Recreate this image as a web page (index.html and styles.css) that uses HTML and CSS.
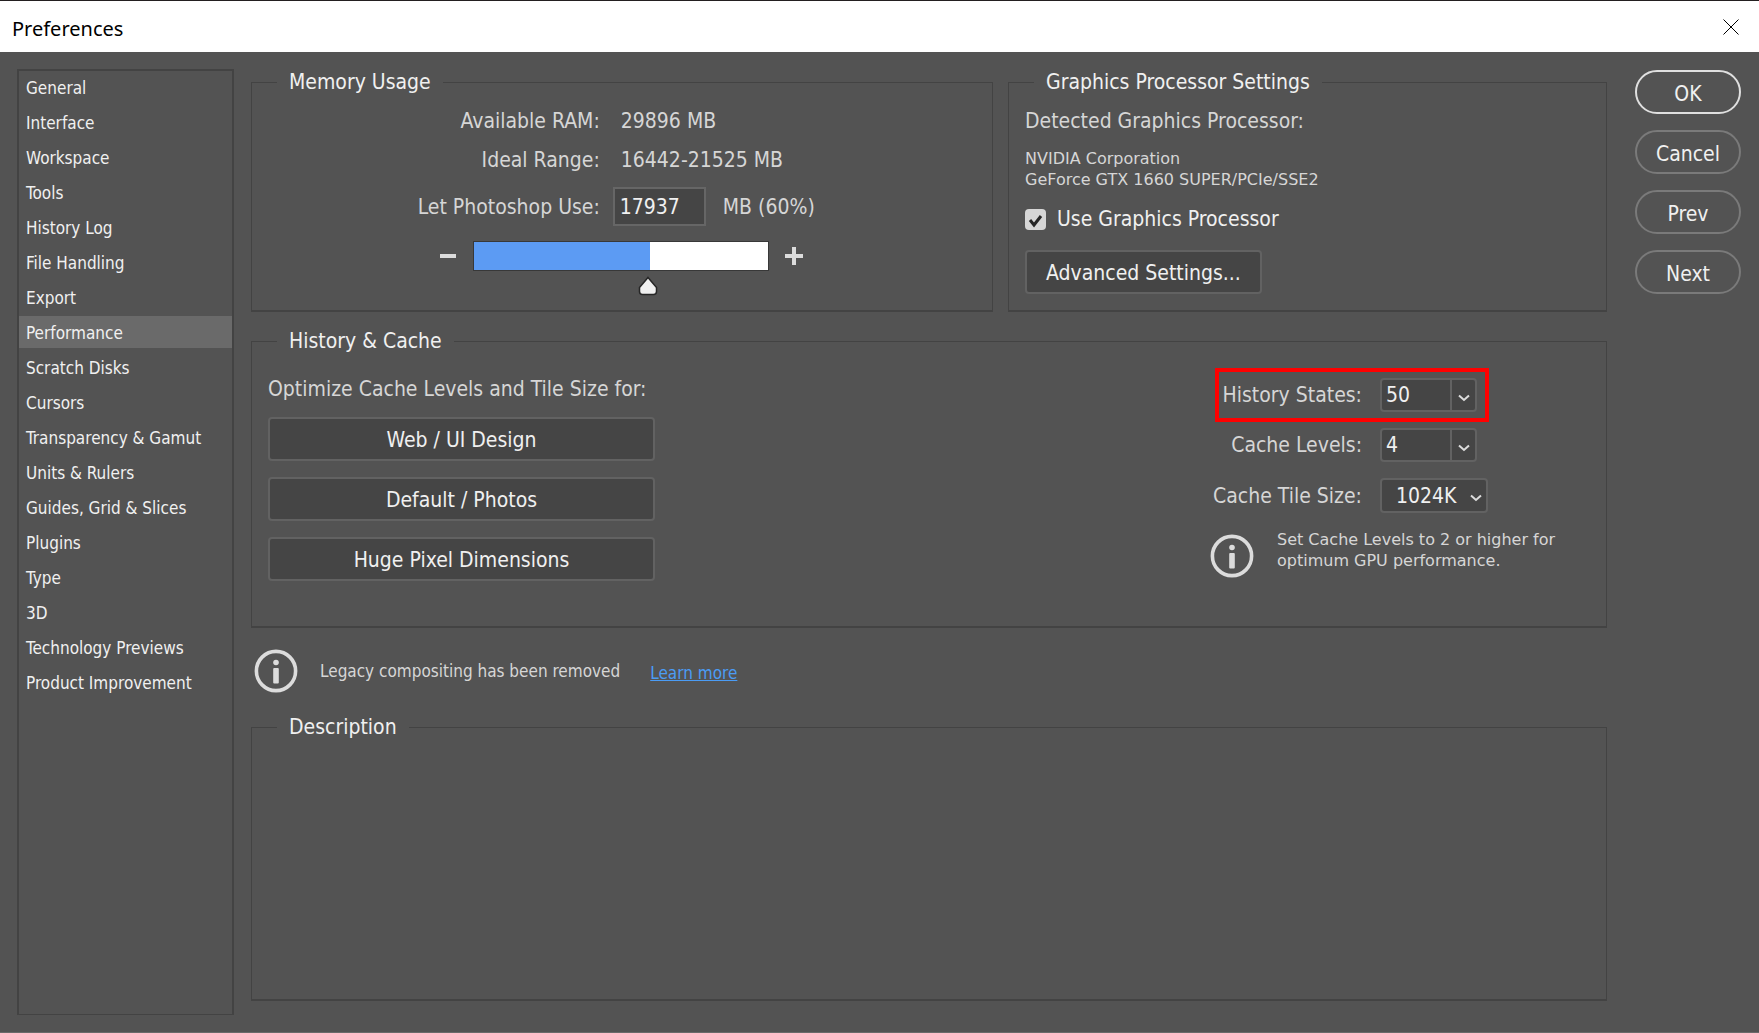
FILE: index.html
```html
<!doctype html>
<html lang="en">

<head>
    <meta charset="utf-8">
    <title>Preferences</title>
    <link rel="stylesheet" href="styles.css">
</head>

<body>
    <header class="titleBar">
        <h1>Preferences</h1>
        <button class="closeButton" type="button" aria-label="Close">
            <svg width="16" height="16" viewBox="0 0 16 16"><path d="M0.5 0.5l15 15M15.5 0.5l-15 15" /></svg>
        </button>
    </header>

    <form class="preferences" action="">
        <nav class="sections">
            <a href="#general">General</a>
            <a href="#interface">Interface</a>
            <a href="#workspace">Workspace</a>
            <a href="#tools">Tools</a>
            <a href="#history-log">History Log</a>
            <a href="#file-handling">File Handling</a>
            <a href="#export">Export</a>
            <a href="#performance" class="active">Performance</a>
            <a href="#scratch-disks">Scratch Disks</a>
            <a href="#cursors">Cursors</a>
            <a href="#transparency">Transparency &amp; Gamut</a>
            <a href="#units">Units &amp; Rulers</a>
            <a href="#guides">Guides, Grid &amp; Slices</a>
            <a href="#plugins">Plugins</a>
            <a href="#type">Type</a>
            <a href="#3d">3D</a>
            <a href="#technology">Technology Previews</a>
            <a href="#product">Product Improvement</a>
        </nav>

        <main class="content">
            <div class="topRow">
                <fieldset class="memory">
                    <legend>Memory Usage</legend>
                    <div class="memoryRow">
                        <span class="memoryLabel">Available RAM:</span>
                        <span class="memoryValue">29896 MB</span>
                    </div>
                    <div class="memoryRow">
                        <span class="memoryLabel">Ideal Range:</span>
                        <span class="memoryValue">16442-21525 MB</span>
                    </div>
                    <div class="memoryRow memoryInputRow">
                        <label class="memoryLabel" for="memoryInput">Let Photoshop Use:</label>
                        <input id="memoryInput" class="memoryInput" type="text" value="17937">
                        <span>MB (60%)</span>
                    </div>
                    <div class="sliderRow">
                        <button class="stepButton" type="button" aria-label="Less memory">
                            <svg width="18" height="18" viewBox="0 0 18 18"><path d="M1 9h16" /></svg>
                        </button>
                        <input class="slider" type="range" min="0" max="100" value="60" aria-label="Memory used">
                        <button class="stepButton" type="button" aria-label="More memory">
                            <svg width="18" height="18" viewBox="0 0 18 18"><path d="M0 9h18M9 0v18" /></svg>
                        </button>
                    </div>
                </fieldset>

                <fieldset class="graphics">
                    <legend>Graphics Processor Settings</legend>
                    <p class="detected">Detected Graphics Processor:</p>
                    <p class="hint">NVIDIA Corporation<br>GeForce GTX 1660 SUPER/PCIe/SSE2</p>
                    <label class="useGpu">
                        <input type="checkbox" checked>
                        Use Graphics Processor
                    </label>
                    <button class="button advanced" type="button">Advanced Settings...</button>
                </fieldset>
            </div>

            <fieldset class="history">
                <legend>History &amp; Cache</legend>
                <div class="optimize">
                    <p>Optimize Cache Levels and Tile Size for:</p>
                    <button class="button" type="button">Web / UI Design</button>
                    <button class="button" type="button">Default / Photos</button>
                    <button class="button" type="button">Huge Pixel Dimensions</button>
                </div>
                <div class="cache">
                    <div class="cacheRow highlight">
                        <label for="historyStates">History States:</label>
                        <div class="combo">
                            <input id="historyStates" type="text" value="50">
                            <button type="button" aria-label="Choose history states">
                                <svg width="12" height="8" viewBox="0 0 12 8"><path d="M1 1.5l5 4.5 5-4.5" /></svg>
                            </button>
                        </div>
                    </div>
                    <div class="cacheRow">
                        <label for="cacheLevels">Cache Levels:</label>
                        <div class="combo">
                            <input id="cacheLevels" type="text" value="4">
                            <button type="button" aria-label="Choose cache levels">
                                <svg width="12" height="8" viewBox="0 0 12 8"><path d="M1 1.5l5 4.5 5-4.5" /></svg>
                            </button>
                        </div>
                    </div>
                    <div class="cacheRow">
                        <label for="tileSize">Cache Tile Size:</label>
                        <div class="selectWrapper">
                            <select id="tileSize">
                                <option>128K</option>
                                <option>132K</option>
                                <option selected>1024K</option>
                                <option>1028K</option>
                            </select>
                            <svg width="12" height="8" viewBox="0 0 12 8"><path d="M1 1.5l5 4.5 5-4.5" /></svg>
                        </div>
                    </div>
                    <div class="cacheInfo">
                        <svg class="infoIcon" width="44" height="44" viewBox="0 0 44 44">
                            <circle class="ring" cx="22" cy="22" r="19.6" />
                            <circle cx="22" cy="13.5" r="2.8" />
                            <rect x="19.2" y="19" width="5.6" height="15.5" rx="1" />
                        </svg>
                        <p class="hint">Set Cache Levels to 2 or higher for<br>optimum GPU performance.</p>
                    </div>
                </div>
            </fieldset>

            <div class="notice">
                <svg class="infoIcon" width="44" height="44" viewBox="0 0 44 44">
                    <circle class="ring" cx="22" cy="22" r="19.6" />
                    <circle cx="22" cy="13.5" r="2.8" />
                    <rect x="19.2" y="19" width="5.6" height="15.5" rx="1" />
                </svg>
                <span>Legacy compositing has been removed</span>
                <a href="#legacy">Learn more</a>
            </div>

            <fieldset class="description">
                <legend>Description</legend>
            </fieldset>
        </main>

        <div class="actions">
            <button class="pill primary" type="submit">OK</button>
            <button class="pill" type="button">Cancel</button>
            <button class="pill" type="button">Prev</button>
            <button class="pill" type="button">Next</button>
        </div>
    </form>
</body>

</html>
```

FILE: styles.css
```css
* {
    margin: 0;
    padding: 0;
    box-sizing: border-box;
}

body {
    min-height: 100vh;
    display: flex;
    flex-direction: column;
    background-color: #535353;
    border-top: 1px solid #231f20;
    border-bottom: 1px solid #6a6a6a;
    color: #d6d6d6;
    font: 21px/26px "DejaVu Sans Condensed", "Noto Sans", sans-serif;
}

button,
input,
select {
    font: inherit;
    color: #f0f0f0;
}

svg {
    display: block;
    fill: none;
    stroke: #dcdcdc;
    stroke-width: 2;
}

.titleBar {
    display: flex;
    justify-content: space-between;
    align-items: center;
    height: 51px;
    padding: 0 20px 0 12px;
    background-color: white;
}

.titleBar h1 {
    padding-top: 4px;
    color: black;
    font: 20px/26px "Noto Sans", sans-serif;
}

.closeButton {
    border: none;
    background: none;
}

.closeButton svg {
    stroke: black;
    stroke-width: 1;
}

.preferences {
    flex: 1;
    display: flex;
    padding: 17px 18px 17px 17px;
}

.sections {
    flex: none;
    width: 217px;
    display: flex;
    flex-direction: column;
    gap: 3px;
    margin-right: 17px;
    border: 2px solid #434343;
    border-bottom-width: 1px;
}

.sections a {
    height: 32px;
    padding-left: 7px;
    color: #f0f0f0;
    font-size: 17px;
    line-height: 34px;
    text-decoration: none;
}

.sections .active {
    background-color: #6a6a6a;
}

.content {
    flex: 1;
    display: flex;
    flex-direction: column;
    padding-bottom: 14px;
}

fieldset {
    min-width: 0;
    border: 1px solid #434343;
    border-bottom-width: 2px;
}

legend {
    margin-left: 25px;
    padding: 0 12px;
    color: #f0f0f0;
}

/* these two have 16px of their own padding */
.graphics legend,
.history legend {
    margin-left: 9px;
}

.hint {
    font: 16px/21px "DejaVu Sans", sans-serif;
}

.topRow {
    display: grid;
    grid-template-columns: 742fr 599fr;
    gap: 15px;
    margin-bottom: 16px;
}

.memory {
    padding: 13px 0 39px;
}

.memoryRow {
    display: grid;
    grid-template-columns: 47% auto 1fr;
    column-gap: 13px;
    align-items: center;
    margin-bottom: 13px;
}

.memoryInputRow {
    margin: 14px 0 15px;
}

.memoryLabel {
    text-align: right;
}

.memoryValue {
    padding-left: 8px;
}

.memoryInput {
    width: 93px;
    height: 39px;
    margin-right: 4px;
    padding: 0 5px;
    border: 2px solid #666;
    background-color: #454545;
}

.sliderRow {
    display: flex;
    justify-content: center;
    align-items: center;
    gap: 16px;
    padding-right: 3px;
}

.stepButton {
    border: none;
    background: none;
}

.stepButton svg {
    stroke-width: 4;
}

.slider {
    width: 296px;
    height: 30px;
    appearance: none;
    border: 1px solid #383838;
    background: linear-gradient(to right, #5c9bf3 60%, white 60%);
}

/* the handle hangs under the bar */
.slider::-webkit-slider-thumb {
    appearance: none;
    width: 20px;
    height: 20px;
    margin-top: 60px;
    background: url("data:image/svg+xml,%3Csvg xmlns='http://www.w3.org/2000/svg' width='20' height='20'%3E%3Cpath d='M10 1.5l8.5 10v4q0 3-3 3h-11q-3 0-3-3v-4z' fill='%23f0f0f0' stroke='%23262626' stroke-width='1.5'/%3E%3C/svg%3E") no-repeat;
}

.graphics {
    display: flex;
    flex-direction: column;
    align-items: flex-start;
    padding: 13px 16px 0;
}

.detected {
    margin-bottom: 14px;
}

.useGpu {
    display: flex;
    align-items: center;
    gap: 11px;
    margin: 16px 0 18px;
    color: #f0f0f0;
}

.useGpu input {
    width: 21px;
    height: 21px;
    appearance: none;
    border-radius: 4px;
    background: #d6d6d6 url("data:image/svg+xml,%3Csvg xmlns='http://www.w3.org/2000/svg' width='21' height='21'%3E%3Cpath d='M5 11l4 5 7-9' fill='none' stroke='%23262626' stroke-width='3'/%3E%3C/svg%3E") no-repeat;
}

.button {
    height: 44px;
    padding-top: 2px;
    border: 2px solid #626262;
    border-radius: 4px;
    background-color: #454545;
}

.advanced {
    padding: 2px 19px 0;
}

.history {
    display: flex;
    justify-content: space-between;
    padding: 0 16px 43px;
}

.optimize {
    width: 387px;
    display: flex;
    flex-direction: column;
    gap: 16px;
    padding-top: 21px;
}

.optimize p {
    padding-top: 2px;
    line-height: 24px;
}

.cache {
    width: 380px;
    display: flex;
    flex-direction: column;
    align-items: flex-start;
    gap: 16px;
    padding-top: 24px;
}

.cacheRow {
    position: relative;
    display: flex;
    align-items: center;
    gap: 18px;
}

.cacheRow label {
    width: 152px;
    text-align: right;
    white-space: nowrap;
}

/* red frame drawn over the row */
.highlight::after {
    content: "";
    position: absolute;
    inset: -10px -12px -10px 5px;
    border: 4px solid #f00;
    pointer-events: none;
}

.combo {
    display: flex;
    width: 97px;
    height: 34px;
    border: 2px solid #626262;
    border-radius: 4px;
    background-color: #454545;
}

.combo input {
    flex: 1;
    min-width: 0;
    padding-left: 4px;
    border: none;
    background: none;
}

.combo button {
    display: flex;
    justify-content: center;
    align-items: center;
    width: 25px;
    padding-top: 6px;
    border: none;
    border-left: 2px solid #626262;
    background: none;
}

.selectWrapper {
    position: relative;
}

.selectWrapper select {
    width: 108px;
    height: 35px;
    padding-left: 14px;
    appearance: none;
    border: 2px solid #626262;
    border-radius: 4px;
    background-color: #454545;
}

.selectWrapper svg {
    position: absolute;
    top: 16px;
    right: 6px;
    pointer-events: none;
}

.cacheInfo {
    display: flex;
    align-items: center;
    gap: 23px;
}

.cacheInfo p {
    padding-bottom: 12px;
}

.infoIcon {
    flex: none;
    fill: #dcdcdc;
    stroke: none;
}

.infoIcon .ring {
    fill: none;
    stroke: #dcdcdc;
    stroke-width: 3.6;
}

.notice {
    display: flex;
    align-items: center;
    height: 86px;
    padding-left: 3px;
    font-size: 17px;
}

.notice span {
    margin: 0 30px 0 22px;
}

.notice a {
    padding-top: 4px;
    color: #4b9cf5;
}

.description {
    flex: 1;
}

.actions {
    flex: none;
    width: 106px;
    display: flex;
    flex-direction: column;
    gap: 16px;
    margin-left: 28px;
    padding-top: 1px;
}

.pill {
    height: 44px;
    padding-top: 3px;
    border: 2px solid #7a7a7a;
    border-radius: 22px;
    background: none;
}

.primary {
    border-color: #e0e0e0;
}
```
